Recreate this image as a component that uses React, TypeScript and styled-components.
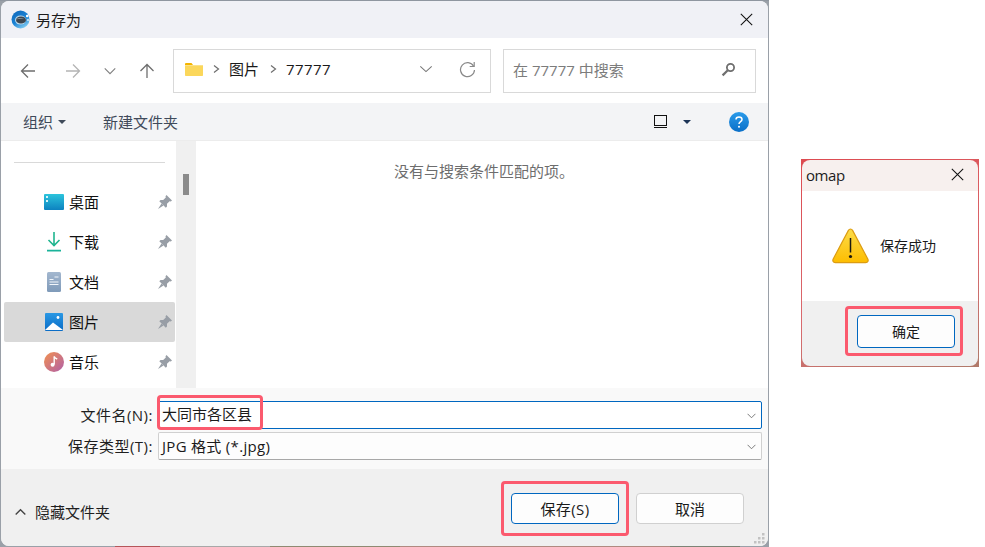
import React from 'react';
import styled, { createGlobalStyle } from 'styled-components';

const GlobalStyle = createGlobalStyle`
  html, body {
    margin: 0;
    padding: 0;
    background: #fff;
  }
  body {
    font-family: "Open Sans", "Noto Sans CJK SC", sans-serif;
    font-size: 15px;
    line-height: 20px;
    color: #1a1a1a;
    overflow: hidden;
  }
`;

const Desktop = styled.div`
  width: 985px;
  height: 547px;
  display: flex;
  align-items: flex-start;
  overflow: hidden;
`;

// what shows of the wallpaper round the corners of the dialog
const SaveBackdrop = styled.div`
  width: 769px;
  height: 547px;
  flex: none;
  box-sizing: border-box;
  padding: 1px;
  background:
    linear-gradient(#8f96a0, #8f96a0) top / 100% 1px no-repeat,
    linear-gradient(
      90deg,
      #9aa0a8 0 115px,
      #b5565a 115px 160px,
      #a8a8a8 160px 270px,
      #8f8a72 270px 400px,
      #b08a80 400px 670px,
      #7d8476 670px 740px,
      #9aa0a8 740px
    );
`;

const SaveWindow = styled.div`
  height: 100%;
  border-radius: 8px;
  overflow: hidden;
  display: flex;
  flex-direction: column;
  background: #f0f0f0;
`;

const TitleBar = styled.div`
  height: 37px;
  flex: none;
  display: flex;
  align-items: center;
  padding: 0 0 0 10px;
  background: #f0f1f6;
`;

const TitleText = styled.span`
  margin-left: 6px;
  color: #1c1c1c;
`;

const CloseButton = styled.div`
  margin-left: auto;
  margin-right: 15px;
  display: flex;
`;

const NavRow = styled.div`
  height: 65px;
  flex: none;
  display: flex;
  align-items: center;
  background: #fff;
  padding-left: 19px;
`;

const NavIcon = styled.div<{ $w: number }>`
  width: ${(p) => p.$w}px;
  display: flex;
  flex: none;
`;

const AddressBox = styled.div`
  width: 318px;
  height: 44px;
  box-sizing: border-box;
  margin-left: 17px;
  flex: none;
  border: 1px solid #d9d9d9;
  display: flex;
  align-items: center;
  padding: 0 0 3px 11px;
`;

const Crumb = styled.span`
  color: #1a1a1a;
`;

const CrumbNumber = styled(Crumb)`
  letter-spacing: 0.4px;
`;

const CrumbSep = styled.div<{ $ml: number }>`
  margin: 0 9px 0 ${(p) => p.$ml}px;
  display: flex;
`;

const AddressTools = styled.div`
  margin-left: auto;
  display: flex;
  align-items: center;
  gap: 26px;
  padding-right: 14px;
`;

const SearchBox = styled.div`
  width: 253px;
  height: 44px;
  box-sizing: border-box;
  margin-left: 12px;
  flex: none;
  border: 1px solid #d9d9d9;
  display: flex;
  align-items: center;
  justify-content: space-between;
  padding: 0 19px 2px 9px;
  color: #7c7c7c;
`;

const ToolBar = styled.div`
  height: 38px;
  flex: none;
  box-sizing: border-box;
  display: flex;
  align-items: center;
  padding-left: 22px;
  background: #f3f4f6;
  border-bottom: 1px solid #ececec;
`;

const ToolLabel = styled.span`
  color: #3f4a5a;
`;

const Caret = styled.div<{ $color: string }>`
  width: 0;
  height: 0;
  border-left: 4px solid transparent;
  border-right: 4px solid transparent;
  border-top: 4px solid ${(p) => p.$color};
`;

const ToolRight = styled.div`
  margin-left: auto;
  display: flex;
  align-items: center;
  padding-right: 19px;
`;

const NewFolder = styled(ToolLabel)`
  margin-left: 37px;
`;

const OrganizeCaret = styled(Caret)`
  margin-left: 5px;
`;

const ViewCaret = styled(Caret)`
  margin-left: 15px;
  margin-right: 38px;
`;

const Body = styled.div`
  height: 247px;
  flex: none;
  display: flex;
  background: #fff;
`;

const Sidebar = styled.div`
  width: 175px;
  flex: none;
  box-sizing: border-box;
  padding: 21px 0 0 3px;
`;

const Divider = styled.div`
  height: 1px;
  width: 151px;
  margin: 0 0 19px 10px;
  background: #d9d9d9;
`;

const NavItem = styled.div<{ $active?: boolean }>`
  height: 40px;
  width: 171px;
  box-sizing: border-box;
  display: flex;
  align-items: center;
  padding: 0 3px 0 40px;
  border-radius: 2px;
  background: ${(p) => (p.$active ? '#d9d9d9' : 'transparent')};
`;

const ItemIcon = styled.div`
  width: 20px;
  height: 20px;
  flex: none;
  display: flex;
`;

const ItemLabel = styled.span`
  margin-left: 5px;
  color: #111;
`;

const PinSlot = styled.div`
  margin-left: auto;
  display: flex;
`;

const ScrollTrack = styled.div`
  width: 20px;
  flex: none;
  background: #f0f0f0;
  padding: 33px 0 0 7px;
  box-sizing: border-box;
`;

const ScrollThumb = styled.div`
  width: 6px;
  height: 21px;
  background: #8b8b8b;
`;

const Results = styled.div`
  flex: 1;
  text-align: center;
  padding: 20px 0 0 4px;
  color: #6d6d6d;
`;

const FormArea = styled.div`
  height: 81px;
  flex: none;
  box-sizing: border-box;
  background: #f9f9f9;
  padding: 13px 0 0 0;
  display: flex;
  flex-direction: column;
  gap: 3px;
`;

const FormRow = styled.div`
  display: flex;
  align-items: center;
`;

const FormLabel = styled.span`
  width: 157px;
  flex: none;
  text-align: right;
  padding-right: 5px;
  box-sizing: border-box;
  color: #1f1f1f;
  letter-spacing: 0.5px;
`;

const Combo = styled.div<{ $focused?: boolean }>`
  position: relative;
  width: 604px;
  height: 28px;
  box-sizing: border-box;
  border: 1px solid ${(p) => (p.$focused ? '#0067c0' : '#d0d0d0')};
  border-bottom-color: ${(p) => (p.$focused ? '#0067c0' : '#a8a8a8')};
  border-radius: 2px;
  background: ${(p) => (p.$focused ? '#fff' : '#fdfdfd')};
  display: flex;
  align-items: center;
  justify-content: space-between;
  padding: 0 5px 0 3px;
  color: #1a1a1a;
`;

const ComboText = styled.span<{ $spaced?: boolean }>`
  letter-spacing: ${(p) => (p.$spaced ? '0.3px' : '0')};
  position: relative;
  top: ${(p) => (p.$spaced ? '0' : '-1px')};
`;

const Footer = styled.div`
  flex: 1;
  position: relative;
  display: flex;
  align-items: flex-start;
  padding: 0 24px 0 14px;
  background: #f0f0f0;
`;

const HideFolders = styled.div`
  margin-top: 33px;
  display: flex;
  align-items: center;
  gap: 9px;
  color: #1f1f1f;
`;

const FooterButtons = styled.div`
  margin-left: auto;
  margin-top: 24px;
  display: flex;
  gap: 17px;
`;

const Button = styled.div<{ $primary?: boolean; $w: number; $h: number }>`
  position: relative;
  width: ${(p) => p.$w}px;
  height: ${(p) => p.$h}px;
  box-sizing: border-box;
  border: 1px solid ${(p) => (p.$primary ? '#0067c0' : '#d0d0d0')};
  border-radius: 4px;
  background: #fdfdfd;
  display: flex;
  align-items: center;
  justify-content: center;
  color: #1a1a1a;
`;

const SaveText = styled.span`
  letter-spacing: 0.4px;
`;

const ConfirmText = styled.span`
  font-size: 14px;
`;

const Highlight = styled.div<{ $t: number; $l: number; $w: number; $h: number }>`
  position: absolute;
  top: ${(p) => p.$t}px;
  left: ${(p) => p.$l}px;
  width: ${(p) => p.$w}px;
  height: ${(p) => p.$h}px;
  box-sizing: border-box;
  border: 3px solid #fb5a6e;
  border-radius: 4px;
  pointer-events: none;
`;

const ResizeGrip = styled.div`
  position: absolute;
  right: 2px;
  bottom: 1px;
  display: flex;
`;

// message box
const MessageBackdrop = styled.div`
  width: 178px;
  height: 208px;
  flex: none;
  margin: 159px 0 0 32px;
  box-sizing: border-box;
  padding: 1px;
  background: linear-gradient(160deg, #dd4a50 0%, #d96a6e 60%, #b07a6a 100%);
`;

const MessageBox = styled.div`
  height: 100%;
  border-radius: 8px;
  overflow: hidden;
  display: flex;
  flex-direction: column;
`;

const MessageTitle = styled.div`
  height: 31px;
  flex: none;
  display: flex;
  align-items: center;
  justify-content: space-between;
  padding: 0 14px 2px 4px;
  box-sizing: border-box;
  background: #f7f0ee;
  color: #1c1c1c;
`;

const MessageName = styled.span`
  letter-spacing: -0.4px;
`;

const MessageBody = styled.div`
  height: 110px;
  flex: none;
  display: flex;
  align-items: center;
  box-sizing: border-box;
  padding-left: 30px;
  background: #fff;
  gap: 11px;
  font-size: 14px;
  color: #1a1a1a;
`;

const MessageFooter = styled.div`
  flex: 1;
  display: flex;
  justify-content: flex-end;
  padding: 14px 23px 0 0;
  background: #f0f0f0;
`;

const Stroke = ({ d, c = '#777', w = 1.4, s = 16 }: { d: string; c?: string; w?: number; s?: number }) => (
  <svg width={s} height={s} viewBox="0 0 16 16" fill="none" stroke={c} strokeWidth={w}>
    <path d={d} />
  </svg>
);

const AppLogo = () => (
  <svg width="19" height="19" viewBox="0 0 19 19">
    <defs>
      <linearGradient id="logoG" x1="0" y1="0" x2="0.6" y2="1">
        <stop offset="0" stopColor="#0f66b8" />
        <stop offset="0.6" stopColor="#1a82d4" />
        <stop offset="1" stopColor="#7cc8f0" />
      </linearGradient>
    </defs>
    <circle cx="9.5" cy="9.5" r="9" fill="url(#logoG)" />
    <ellipse cx="9.5" cy="10" rx="5.5" ry="4.5" fill="#bcd8ea" />
    <ellipse cx="10" cy="10" rx="5" ry="3.6" fill="#3b4650" />
    <path d="M5 9.5c1.5-1.800 6-2 8-.5-2.500-.6-5.500-.5-8 .5Z" fill="#8a98a2" />
    <circle cx="16.2" cy="6" r="1.3" fill="#fff" />
    <circle cx="17" cy="10" r="0.9" fill="#e8f5fc" />
  </svg>
);

const FolderIcon = () => (
  <svg width="19" height="15" viewBox="0 0 19 15">
    <path d="M0 2a1 1 0 0 1 1-1h5.5L8 3H0Z" fill="#f4b400" />
    <rect x="0" y="3" width="18" height="11" rx="0.8" fill="#fbd75b" />
    <rect x="0" y="3" width="18" height="1" fill="#fae18a" />
  </svg>
);

const RefreshIcon = () => (
  <svg width="17" height="17" viewBox="0 0 17 17" fill="none" stroke="#8a8a8a" strokeWidth="1.2">
    <path d="M14.6 5.2A7 7 0 1 0 15.5 9" />
    <path d="M15.2 1v4.5h-4.5" />
  </svg>
);

const SearchIcon = () => (
  <svg width="15" height="15" viewBox="0 0 15 15" fill="none">
    <circle cx="9.5" cy="5.5" r="3.6" stroke="#6f6f6f" strokeWidth="1.8" />
    <path d="M6.8 8.2 1.6 13.4" stroke="#6f6f6f" strokeWidth="2.2" />
  </svg>
);

const ViewIcon = () => (
  <svg width="15" height="14" viewBox="0 0 15 14" fill="none" stroke="#111" strokeWidth="1">
    <rect x="1.5" y="0.5" width="12" height="10" />
    <path d="M1 12.5h13" />
  </svg>
);

const HelpIcon = () => (
  <svg width="20" height="20" viewBox="0 0 20 20">
    <defs>
      <linearGradient id="helpG" x1="0" y1="0" x2="0" y2="1">
        <stop offset="0" stopColor="#2a9bea" />
        <stop offset="1" stopColor="#0a6fc8" />
      </linearGradient>
    </defs>
    <circle cx="10" cy="10" r="10" fill="url(#helpG)" />
    <path d="M7 7.5C7 5.8 8.3 5 10 5s3 .9 3 2.4c0 2.3-3 2.2-3 4.600" fill="none" stroke="#fff" strokeWidth="1.5" />
    <circle cx="10" cy="14.8" r="1" fill="#fff" />
  </svg>
);

const PinIcon = () => (
  <svg width="14" height="14" viewBox="0 0 14 14" fill="#989ea6">
    <path d="M8.5 0 14 5.5 12.8 6.5 11.6 6.2 9 8.8 9 11.5 7.8 12.7 1.3 6.2 2.5 5 5.200 5 7.800 2.400 7.500 1.200Z" />
    <path d="M3.5 8.5 0 14 5.5 10.5Z" />
  </svg>
);

const DesktopIcon = () => (
  <svg width="20" height="20" viewBox="0 0 20 20">
    <defs>
      <linearGradient id="deskG" x1="0" y1="0" x2="0" y2="1">
        <stop offset="0" stopColor="#2cc4dc" />
        <stop offset="1" stopColor="#0d82c0" />
      </linearGradient>
    </defs>
    <rect x="0" y="2" width="20" height="16" rx="1" fill="url(#deskG)" />
    <rect x="2" y="4" width="2" height="2" fill="#d7f5fa" />
    <rect x="2" y="8" width="2" height="2" fill="#d7f5fa" />
  </svg>
);

const DownloadIcon = () => (
  <svg width="20" height="20" viewBox="0 0 20 20" fill="none" stroke="#1eb58f" strokeWidth="1.6">
    <path d="M10 0v13.5M4.500 8 10 13.5 15.5 8" />
    <path d="M3 18.6h14" stroke="#1bb39a" strokeWidth="1.8" />
  </svg>
);

const DocIcon = () => (
  <svg width="20" height="20" viewBox="0 0 20 20">
    <defs>
      <linearGradient id="docG" x1="0" y1="0" x2="0" y2="1">
        <stop offset="0" stopColor="#a3b7cf" />
        <stop offset="1" stopColor="#7f9ab9" />
      </linearGradient>
    </defs>
    <rect x="3" y="0" width="14" height="20" rx="1.5" fill="url(#docG)" />
    <path d="M5.5 7.500h4M5.500 10h9M5.500 12.500h9M10.500 5h4" stroke="#f1f5fa" strokeWidth="1" fill="none" />
  </svg>
);

const PictureIcon = () => (
  <svg width="20" height="20" viewBox="0 0 20 20">
    <defs>
      <linearGradient id="picG" x1="0" y1="0" x2="0" y2="1">
        <stop offset="0" stopColor="#2a98e4" />
        <stop offset="1" stopColor="#0a6cc6" />
      </linearGradient>
    </defs>
    <rect x="1" y="1" width="18" height="18" rx="1" fill="url(#picG)" />
    <circle cx="14" cy="5.5" r="1.4" fill="#fff" />
    <path d="M1 18 9 10.5 19 18Z" fill="#fff" />
  </svg>
);

const MusicIcon = () => (
  <svg width="20" height="20" viewBox="0 0 20 20">
    <defs>
      <linearGradient id="musG" x1="0" y1="0" x2="1" y2="1">
        <stop offset="0" stopColor="#f29150" />
        <stop offset="1" stopColor="#b05fa8" />
      </linearGradient>
    </defs>
    <circle cx="10" cy="10" r="10" fill="url(#musG)" />
    <path d="M10.2 4.5v8" stroke="#fff" strokeWidth="1.4" />
    <path d="M10.2 4.5c.4 1.800 2 2 3 2.600" stroke="#fff" strokeWidth="1.4" fill="none" />
    <circle cx="8.6" cy="12.8" r="2" fill="#fff" />
  </svg>
);

const WarningIcon = () => (
  <svg width="37" height="36" viewBox="0 0 37 36">
    <defs>
      <linearGradient id="warnG" x1="0" y1="0" x2="0" y2="1">
        <stop offset="0" stopColor="#fcdc4a" />
        <stop offset="1" stopColor="#fdbd00" />
      </linearGradient>
    </defs>
    <path
      d="M18.5 1c1 0 1.600.6 2.100 1.400L35.800 31c.9 1.900-.1 3.700-2.100 3.700H3.300c-2 0-3-1.800-2.100-3.700L16.400 2.400C16.900 1.600 17.500 1 18.500 1Z"
      fill="url(#warnG)"
      stroke="#dc9c12"
      strokeWidth="1.2"
    />
    <path d="M18.5 10v14.5" stroke="#1d1a10" strokeWidth="1.5" />
    <circle cx="18.5" cy="28.5" r="1.6" fill="#1d1a10" />
  </svg>
);

const GripIcon = () => (
  <svg width="12" height="12" viewBox="0 0 12 12" fill="#c2c2c2">
    <rect x="8" y="0" width="2.5" height="2.5" />
    <rect x="4" y="4" width="2.5" height="2.5" />
    <rect x="8" y="4" width="2.5" height="2.5" />
    <rect x="0" y="8" width="2.5" height="2.5" />
    <rect x="4" y="8" width="2.5" height="2.5" />
    <rect x="8" y="8" width="2.5" height="2.5" />
  </svg>
);

const places = [
  { label: '桌面', icon: <DesktopIcon /> },
  { label: '下载', icon: <DownloadIcon /> },
  { label: '文档', icon: <DocIcon /> },
  { label: '图片', icon: <PictureIcon />, active: true },
  { label: '音乐', icon: <MusicIcon /> },
];

const App: React.FC = () => {
  return (
    <Desktop>
      <GlobalStyle />
      <SaveBackdrop>
        <SaveWindow>
          <TitleBar>
            <AppLogo />
            <TitleText>另存为</TitleText>
            <CloseButton>
              <Stroke s={13} c="#111" w={1.3} d="M1 1 15 15M15 1 1 15" />
            </CloseButton>
          </TitleBar>
          <NavRow>
            <NavIcon $w={45}>
              <Stroke c="#6e6e6e" w={1.3} d="M15 8H1.5M8 1.5 1.5 8 8 14.5" />
            </NavIcon>
            <NavIcon $w={38}>
              <Stroke c="#b4b4b4" w={1.3} d="M1 8h13.5M8 1.5 14.5 8 8 14.5" />
            </NavIcon>
            <NavIcon $w={36}>
              <Stroke s={14} c="#808080" w={1.3} d="M2 5 8 11 14 5" />
            </NavIcon>
            <NavIcon $w={17}>
              <Stroke c="#6e6e6e" w={1.3} d="M8 15V1.5M1.5 8 8 1.5 14.5 8" />
            </NavIcon>
            <AddressBox>
              <FolderIcon />
              <CrumbSep $ml={8}>
                <Stroke s={8} c="#6e6e6e" w={2.4} d="M4 1 13 8 4 15" />
              </CrumbSep>
              <Crumb>图片</Crumb>
              <CrumbSep $ml={10}>
                <Stroke s={8} c="#6e6e6e" w={2.4} d="M4 1 13 8 4 15" />
              </CrumbSep>
              <CrumbNumber>77777</CrumbNumber>
              <AddressTools>
                <Stroke s={14} c="#777" w={1.2} d="M1.5 5 8 11 14.5 5" />
                <RefreshIcon />
              </AddressTools>
            </AddressBox>
            <SearchBox>
              <span>在 77777 中搜索</span>
              <SearchIcon />
            </SearchBox>
          </NavRow>
          <ToolBar>
            <ToolLabel>组织</ToolLabel>
            <OrganizeCaret $color="#3f4a5a" />
            <NewFolder>新建文件夹</NewFolder>
            <ToolRight>
              <ViewIcon />
              <ViewCaret $color="#1d3557" />
              <HelpIcon />
            </ToolRight>
          </ToolBar>
          <Body>
            <Sidebar>
              <Divider />
              {places.map((p) => (
                <NavItem key={p.label} $active={p.active}>
                  <ItemIcon>{p.icon}</ItemIcon>
                  <ItemLabel>{p.label}</ItemLabel>
                  <PinSlot>
                    <PinIcon />
                  </PinSlot>
                </NavItem>
              ))}
            </Sidebar>
            <ScrollTrack>
              <ScrollThumb />
            </ScrollTrack>
            <Results>没有与搜索条件匹配的项。</Results>
          </Body>
          <FormArea>
            <FormRow>
              <FormLabel>文件名(N):</FormLabel>
              <Combo $focused>
                <ComboText>大同市各区县</ComboText>
                <Stroke s={9} c="#666" w={1.5} d="M1 5 8 12 15 5" />
                <Highlight $t={-7} $l={-2} $w={106} $h={35} />
              </Combo>
            </FormRow>
            <FormRow>
              <FormLabel>保存类型(T):</FormLabel>
              <Combo>
                <ComboText $spaced>JPG 格式 (*.jpg)</ComboText>
                <Stroke s={9} c="#666" w={1.5} d="M1 5 8 12 15 5" />
              </Combo>
            </FormRow>
          </FormArea>
          <Footer>
            <HideFolders>
              <Stroke s={11} c="#444" w={2} d="M1 11 8 4 15 11" />
              <span>隐藏文件夹</span>
            </HideFolders>
            <FooterButtons>
              <Button $primary $w={108} $h={31}>
                <SaveText>保存(S)</SaveText>
                <Highlight $t={-13} $l={-11} $w={128} $h={55} />
              </Button>
              <Button $w={108} $h={31}>
                取消
              </Button>
            </FooterButtons>
            <ResizeGrip>
              <GripIcon />
            </ResizeGrip>
          </Footer>
        </SaveWindow>
      </SaveBackdrop>
      <MessageBackdrop>
        <MessageBox>
          <MessageTitle>
            <MessageName>omap</MessageName>
            <Stroke s={13} c="#111" w={1.3} d="M1 1 15 15M15 1 1 15" />
          </MessageTitle>
          <MessageBody>
            <WarningIcon />
            <span>保存成功</span>
          </MessageBody>
          <MessageFooter>
            <Button $primary $w={98} $h={33}>
              <ConfirmText>确定</ConfirmText>
              <Highlight $t={-10} $l={-13} $w={118} $h={50} />
            </Button>
          </MessageFooter>
        </MessageBox>
      </MessageBackdrop>
    </Desktop>
  );
};

export default App;
